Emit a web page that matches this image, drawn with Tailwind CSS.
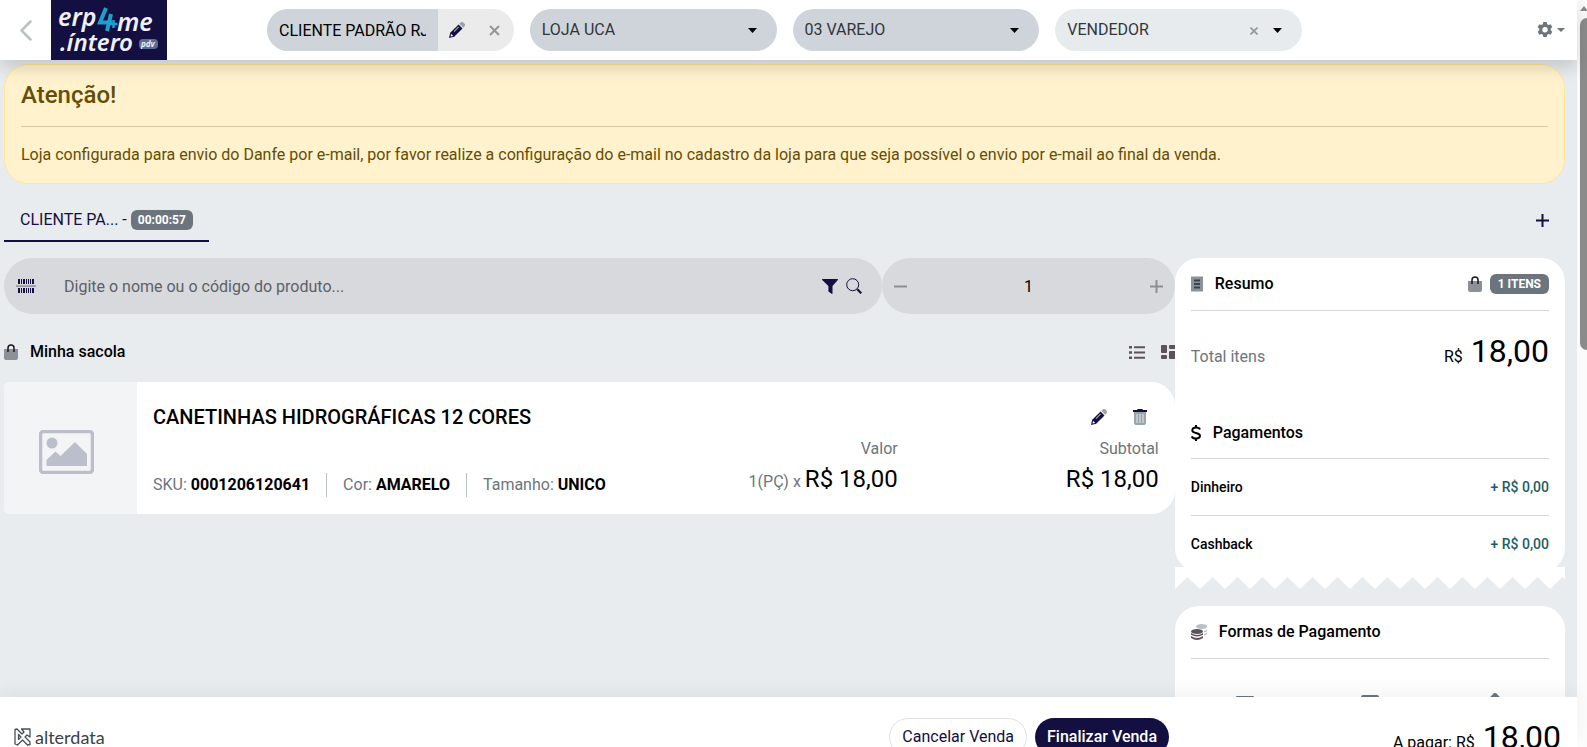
<!DOCTYPE html>
<html lang="pt-BR">
<head>
<meta charset="utf-8">
<meta name="viewport" content="width=device-width, initial-scale=1">
<title>erp4me .íntero pdv</title>
<script src="https://cdn.jsdelivr.net/npm/@tailwindcss/browser@4"></script>
</head>
<body class="flex h-screen overflow-hidden bg-[#e8ecef] font-[Roboto,sans-serif] text-base leading-6 text-black">
<svg class="hidden" aria-hidden="true">
  <symbol id="bag" viewBox="0 0 14 16"><path d="M0 5h14v9a2 2 0 0 1-2 2H2a2 2 0 0 1-2-2z" fill="#8b9197"/><path d="M4 8V4a3 3 0 0 1 6 0v4" fill="none" stroke="#1a1522" stroke-width="1.5"/></symbol>
  <symbol id="pencil" viewBox="0 0 16 16"><path d="M10.300 1.800 11.600.6a2 2 0 0 1 2.800 0l1 1a2 2 0 0 1 0 2.800l-1.200 1.300z" fill="#9aa5ab"/><path d="M9.600 2.500 1.200 10.800 0 16l5.200-1.200 8.300-8.400z" fill="#130f40"/><path d="m5 9.600 4.700-4.700" stroke="#9aa5ab" stroke-width="1.200"/><path d="m2 11.800 2.200 2.200-2.600.5z" fill="#fff"/></symbol>
</svg>

<div class="flex min-w-0 flex-1 flex-col">
  <header class="z-10 flex h-[60px] flex-none items-center bg-white pl-5 pr-3 shadow-[0_8px_16px_rgba(0,0,0,0.15)]">
    <button type="button" aria-label="Voltar" class="w-[31px]">
      <svg class="h-[21px] w-3" viewBox="0 0 12 21" fill="none" stroke="#b9c0c6" stroke-width="2.500" stroke-linecap="round" stroke-linejoin="round"><path d="M10.500 1.500 1.500 10.500l9 9"/></svg>
    </button>
    <a href="#" aria-label="erp4me .íntero pdv" class="block h-[60px] w-[116px] flex-none bg-[#130f40]">
      <svg class="h-[60px] w-[116px]" viewBox="0 0 116 60" font-family="'Noto Sans',sans-serif" font-style="italic" font-weight="600" fill="#f0f0f5">
        <text x="7" y="26" font-size="25">erp</text>
        <path d="M55 8 49 22.500h12M60 14l-4 17" fill="none" stroke="#1ba0d0" stroke-width="4"/>
        <path d="M62.500 20v8M58.500 24h8" stroke="#1ba0d0" stroke-width="2.500"/>
        <text x="66" y="31" font-size="25">me</text>
        <text x="9" y="51" font-size="24">.íntero</text>
        <rect x="88" y="39" width="19" height="10" rx="4" fill="#5a6b96"/>
        <text x="90" y="47" font-size="8" font-weight="700">pdv</text>
      </svg>
    </a>
    <div class="ml-[100px] mr-[235px] grid flex-1 grid-cols-4 gap-4">
      <div class="flex h-[42px] overflow-hidden rounded-full bg-[#ebebeb]">
        <div class="min-w-0 flex-1 bg-[#ced4da] px-3"><input type="text" aria-label="Cliente" value="CLIENTE PADRÃO RJ" class="h-full w-full bg-transparent outline-none"></div>
        <button type="button" aria-label="Editar cliente" class="flex w-[38px] items-center justify-center"><svg class="size-4"><use href="#pencil"/></svg></button>
        <button type="button" aria-label="Remover cliente" class="flex w-[38px] items-center justify-center"><svg class="size-[11px]" viewBox="0 0 11 11" stroke="#8e979e" stroke-width="2"><path d="m1 1 9 9M10 1l-9 9"/></svg></button>
      </div>
      <div class="relative">
        <select aria-label="Loja" class="h-[42px] w-full appearance-none rounded-full bg-[#ced4da] px-3 text-[#31363b] outline-none"><option>LOJA UCA</option></select>
        <svg class="pointer-events-none absolute right-5 top-[19px] h-[5px] w-[9px]" viewBox="0 0 9 5"><path d="M0 0h9L4.500 5z"/></svg>
      </div>
      <div class="relative">
        <select aria-label="Tabela de preço" class="h-[42px] w-full appearance-none rounded-full bg-[#ced4da] px-3 text-[#31363b] outline-none"><option>03 VAREJO</option></select>
        <svg class="pointer-events-none absolute right-5 top-[19px] h-[5px] w-[9px]" viewBox="0 0 9 5"><path d="M0 0h9L4.500 5z"/></svg>
      </div>
      <div class="relative">
        <select aria-label="Vendedor" class="h-[42px] w-full appearance-none rounded-full bg-[#e8ebee] px-3 text-[#31363b] outline-none"><option>VENDEDOR</option></select>
        <button type="button" aria-label="Limpar vendedor" class="absolute right-11 top-[18px]"><svg class="block size-2" viewBox="0 0 8 8" stroke="#8e979e" stroke-width="1.600"><path d="m.5.5 7 7M7.500.5l-7 7"/></svg></button>
        <svg class="pointer-events-none absolute right-5 top-[19px] h-[5px] w-[9px]" viewBox="0 0 9 5"><path d="M0 0h9L4.500 5z"/></svg>
      </div>
    </div>
    <button type="button" aria-label="Configurações" class="flex items-center gap-1 text-[#6c757d]">
      <svg class="size-4" viewBox="0 0 16 16" fill="currentColor"><path fill-rule="evenodd" d="M6.300 0h3.400l.5 2.200 1.300.7 2.100-.7 1.700 2.900-1.600 1.600v1.500l1.600 1.600-1.700 2.900-2.100-.7-1.300.7-.5 2.300H6.300l-.5-2.300-1.300-.7-2.100.7L.7 9.800l1.600-1.600V6.700L.7 5.100l1.700-2.900 2.100.7 1.300-.7zM8 5a2.700 2.700 0 1 0 0 5.400A2.700 2.700 0 0 0 8 5z"/></svg>
      <svg class="h-1 w-2" viewBox="0 0 8 4" fill="currentColor"><path d="M0 0h8L4 4z"/></svg>
    </button>
  </header>

  <main class="min-h-0 flex-1 overflow-hidden pl-1 pr-3 pt-1">
    <section role="alert" class="rounded-[24px] border border-[#ffe69c] bg-[#fff2cd] p-4 text-[#664d03]">
      <h1 class="text-2xl font-medium leading-7">Atenção!</h1>
      <hr class="mb-4 mt-[17px] border-[#d6c8a4]">
      <p>Loja configurada para envio do Danfe por e-mail, por favor realize a configuração do e-mail no cadastro da loja para que seja possível o envio por e-mail ao final da venda.</p>
    </section>

    <nav class="mt-4 flex h-[42px] items-stretch justify-between">
      <a href="#" class="flex items-center gap-1 border-b-2 border-[#130f40] px-4 text-[#130f40]">CLIENTE PA... - <span class="flex h-5 items-center rounded-md bg-[#6c757d] px-[7px] text-xs font-bold text-white">00:00:57</span></a>
      <button type="button" aria-label="Nova venda" class="mr-4 flex items-center pb-0.5"><svg class="size-[13px]" viewBox="0 0 13 13" stroke="#130f40" stroke-width="2"><path d="M6.500 0v13M0 6.500h13"/></svg></button>
    </nav>

    <div class="mt-4 grid grid-cols-[3fr_1fr] items-start">
      <div class="min-w-0">
        <div class="grid grid-cols-[3fr_1fr]">
          <div class="flex h-14 items-center rounded-full bg-[#d8d9dd] pl-3 pr-5">
            <svg class="h-[14px] w-5 flex-none" viewBox="0 0 20 14" fill="#130f40"><path d="M2 0h2v5H2zM5 0h1v5H5zM7 0h2v5H7zM10 0h1v5h-1zM12 0h1v5h-1zM14 0h1v5h-1zM16 0h2v5h-2zM2 9h2v5H2zM5 9h1v5H5zM7 9h2v5H7zM10 9h1v5h-1zM12 9h1v5h-1zM14 9h1v5h-1zM16 9h2v5h-2z"/><path d="M0 6.300h20v1.500H0z" fill="#8b8d96"/></svg>
            <input type="text" aria-label="Produto" placeholder="Digite o nome ou o código do produto..." class="ml-7 h-full min-w-0 flex-1 bg-transparent outline-none placeholder:text-[#5c6166]">
            <button type="button" aria-label="Filtrar"><svg class="block h-[15px] w-4" viewBox="0 0 16 15" fill="#130f40"><path d="M.5 0h15c.5 0 .6.500.3.900L10.500 7v7.300c0 .6-.4.800-.9.500l-3.200-2.300V7L.2.900C-.1.500 0 0 .5 0z"/></svg></button>
            <button type="button" aria-label="Buscar" class="ml-2"><svg class="block size-4" viewBox="0 0 16 16" fill="none" stroke="#130f40"><circle cx="6.700" cy="6.700" r="6"/><path d="m11.300 11.300 4 4" stroke-width="2.200"/></svg></button>
          </div>
          <div class="flex h-14 items-center rounded-full bg-[#d8d9dd] px-3">
            <button type="button" aria-label="Diminuir"><svg class="block size-[13px]" viewBox="0 0 13 13" stroke="#8b8f94" stroke-width="2"><path d="M0 6.500h13"/></svg></button>
            <input type="text" aria-label="Quantidade" value="1" class="h-full min-w-0 flex-1 bg-transparent text-center outline-none">
            <button type="button" aria-label="Aumentar"><svg class="block size-[13px]" viewBox="0 0 13 13" stroke="#8b8f94" stroke-width="2"><path d="M6.500 0v13M0 6.500h13"/></svg></button>
          </div>
        </div>

        <div class="mt-6 flex h-7 items-center">
          <svg class="h-4 w-[14px]"><use href="#bag"/></svg>
          <h2 class="ml-3 font-medium">Minha sacola</h2>
          <button type="button" aria-label="Lista" class="ml-auto"><svg class="block h-[13px] w-4" viewBox="0 0 16 13" fill="#5d525b"><path d="M0 0h3v2.500H0zM0 5.300h3v2.500H0zM0 10.500h3V13H0zM5 .3h11v2H5zM5 5.500h11v2H5zM5 10.700h11v2H5z"/></svg></button>
          <button type="button" aria-label="Grade" class="ml-4"><svg class="block h-[14px] w-[14px]" viewBox="0 0 14 14" fill="#5d525b"><rect width="6" height="8" rx="1"/><rect y="10" width="6" height="4" rx="1"/><path d="M9 0h5v4H9a1 1 0 0 1-1-1V1a1 1 0 0 1 1-1zM9 6h5v8H9a1 1 0 0 1-1-1V7a1 1 0 0 1 1-1z"/></svg></button>
        </div>

        <article class="mt-4 flex h-[132px] overflow-hidden rounded-l-md rounded-r-[24px] bg-white">
          <div class="flex w-[133px] flex-none items-center justify-center bg-[#f3f4f6] pr-2 pt-2">
            <svg class="h-11 w-[55px]" viewBox="0 0 55 44" fill="#bbbecb"><rect x="1.500" y="1.500" width="52" height="41" rx="3" fill="none" stroke="#bbbecb" stroke-width="3.500"/><circle cx="13" cy="13" r="5.500"/><path d="M7.500 36v-6l9-8.500 5 4.500L36 12l12 12v12z"/></svg>
          </div>
          <div class="flex min-w-0 flex-1 flex-col px-4">
            <div class="mt-[23px] flex items-center justify-between">
              <h3 class="text-xl font-medium leading-6">CANETINHAS HIDROGRÁFICAS 12 CORES</h3>
              <div class="mr-3 flex items-center gap-[26px]">
                <button type="button" aria-label="Editar item"><svg class="block size-4"><use href="#pencil"/></svg></button>
                <button type="button" aria-label="Excluir item"><svg class="block h-4 w-[14px]" viewBox="0 0 14 16"><path d="M1 3h12v11a2 2 0 0 1-2 2H3a2 2 0 0 1-2-2z" fill="#9aa5ab"/><path d="M4 5v9M7 5v9M10 5v9" stroke="#e6eaec"/><path d="M0 1h4l.7-1h4.600L10 1h4v2H0z" fill="#130f40"/></svg></button>
              </div>
            </div>
            <div class="mt-2 flex items-end text-[#6c757d]">
              <div class="flex flex-1 items-center">
                <span>SKU: <b class="font-bold text-black">0001206120641</b></span>
                <span class="ml-4 border-l border-[#bbbecb] pl-4">Cor: <b class="font-bold text-black">AMARELO</b></span>
                <span class="ml-4 border-l border-[#bbbecb] pl-4">Tamanho: <b class="font-bold text-black">UNICO</b></span>
              </div>
              <div class="text-right"><div>Valor</div><div class="flex items-baseline justify-end gap-1"><span>1(PÇ) x</span><span class="text-2xl leading-9 text-black">R$ 18,00</span></div></div>
              <div class="w-[261px] text-right"><div>Subtotal</div><div class="text-2xl leading-9 text-black">R$ 18,00</div></div>
            </div>
          </div>
        </article>
      </div>

      <aside class="min-w-0">
        <section class="rounded-[24px] bg-white px-4 pt-[14px]">
          <div class="flex h-6 items-center">
            <svg class="h-4 w-3" viewBox="0 0 12 16"><path d="M0 0l1 1 1-1 1 1 1-1 1 1 1-1 1 1 1-1 1 1 1-1 1 1 1-1v16l-1-1-1 1-1-1-1 1-1-1-1 1-1-1-1 1-1-1-1 1-1-1-1 1z" fill="#8b939a"/><path d="M3 4.500h6M3 8h6M3 11.500h6" stroke="#3c4247" stroke-width="1.800"/></svg>
            <h2 class="ml-3 font-medium">Resumo</h2>
            <svg class="ml-auto h-4 w-[14px]"><use href="#bag"/></svg>
            <span class="ml-2 flex h-5 items-center rounded-md bg-[#6c757d] px-2 text-xs font-bold text-white">1 ITENS</span>
          </div>
          <hr class="mt-[14px] border-[#d5d7d8]">
          <div class="mt-[22px] flex items-baseline justify-between"><span class="text-[#6c757d]">Total itens</span><span>R$ <span class="ml-1 text-[32px] leading-9">18,00</span></span></div>
          <div class="mt-[52px] flex items-center">
            <svg class="h-4 w-[10px]" viewBox="0 0 10 16" fill="none" stroke="#000" stroke-width="2"><path d="M9 4.500C8.500 3 7 2.500 5 2.500S1.300 3.300 1.300 5.200 3.300 7.500 5 8s4 .8 4 2.800-2 2.700-4 2.700-3.700-.7-4.200-2.300M5 0v3M5 13v3"/></svg>
            <h2 class="ml-3 font-medium">Pagamentos</h2>
          </div>
          <hr class="mt-[13px] border-[#d5d7d8]">
          <div class="flex h-14 items-center justify-between text-sm font-medium"><span>Dinheiro</span><span class="text-[#1b5e63]">+ R$ 0,00</span></div>
          <hr class="border-[#d5d7d8]">
          <div class="flex h-14 items-center justify-between text-sm font-medium"><span>Cashback</span><span class="text-[#1b5e63]">+ R$ 0,00</span></div>
        </section>
        <svg class="-mt-[5px] block h-[22px] w-full" aria-hidden="true"><defs><pattern id="teeth" width="25" height="22" patternUnits="userSpaceOnUse"><path d="M0 0h25v22L12.500 10 0 22z" fill="#fff"/></pattern></defs><rect width="100%" height="22" fill="url(#teeth)"/></svg>

        <section class="mt-[17px] rounded-[24px] bg-white px-4 pb-8 pt-[14px]">
          <div class="flex h-6 items-center">
            <svg class="size-4" viewBox="0 0 16 16"><ellipse cx="10.500" cy="2.500" rx="5.500" ry="2.500" fill="#bbbecb"/><path d="M13 7q3-.5 3-2v1.500Q16 8 13 8.500zM13 10q3-.5 3-2v1.500q0 1.500-3 2z" fill="#bbbecb"/><g fill="#5d525b"><ellipse cx="6" cy="7.500" rx="6" ry="2.500"/><path d="M0 9q6 4 12 0v1.800q-6 3.600-12 0zM0 12q6 4 12 0v2q-6 4-12 0z"/></g></svg>
            <h2 class="ml-3 font-medium">Formas de Pagamento</h2>
          </div>
          <hr class="mt-[14px] border-[#d5d7d8]">
          <div class="-mx-2 mt-[34px] grid grid-cols-3">
            <button type="button" aria-label="Dinheiro" class="flex justify-center pt-[3px]"><svg class="h-4 w-[18px]" viewBox="0 0 18 16" fill="#6c757d"><rect width="18" height="14" rx="1"/></svg></button>
            <button type="button" aria-label="Cartão" class="flex justify-center pt-[2px]"><svg class="h-4 w-[18px]" viewBox="0 0 18 16" fill="#6c757d"><rect width="18" height="14" rx="2"/></svg></button>
            <button type="button" aria-label="Pix" class="flex justify-center"><svg class="size-4" viewBox="0 0 16 16" fill="#6c757d"><path d="M6.600.6a2 2 0 0 1 2.800 0l6 6a2 2 0 0 1 0 2.800l-6 6a2 2 0 0 1-2.800 0l-6-6a2 2 0 0 1 0-2.800z"/></svg></button>
          </div>
        </section>
      </aside>
    </div>
  </main>

  <footer class="z-10 flex h-[50px] flex-none items-start overflow-hidden bg-white pl-[14px] pr-4 shadow-[0_-8px_16px_rgba(0,0,0,0.04)]">
    <a href="#" class="mt-7 flex items-center gap-1 font-[Lato,sans-serif] text-lg leading-6 text-[#3c4247]">
      <svg class="h-[18px] w-[17px]" viewBox="0 0 17 18" fill="none" stroke="#4a4f55" stroke-width="1.300" stroke-linejoin="round"><path d="M1 1.500 3 1l5 5 2-2-2.500-3H16v8l-3-2-2 2 5 5v2.500l-2.500.5-5-5-5 5L1 16z"/><path d="M4.500 6.500v5L7 9z"/></svg>
      alterdata
    </a>
    <div class="ml-auto mt-[21px] flex gap-2">
      <button type="button" class="h-[38px] rounded-full border border-[#dee2e6] px-3 text-[#130f40]">Cancelar Venda</button>
      <button type="button" class="h-[38px] rounded-full bg-[#130f40] px-3 font-medium text-white">Finalizar Venda</button>
    </div>
    <div class="mt-[22px] w-[392px] text-right">A pagar: R$ <span class="ml-1 text-[32px] leading-9">18,00</span></div>
  </footer>
</div>

<div class="flex w-[10px] flex-none flex-col items-end bg-[#fbfbfb]" aria-hidden="true">
  <svg class="mt-[6px] h-[5px] w-[7px]" viewBox="0 0 7 5"><path d="M0 5 4 0l4 5z" fill="#8b8b8b"/></svg>
  <div class="mt-[7px] h-[332px] w-[7px] rounded-l-full bg-[#8b8b8b]"></div>
</div>
</body>
</html>
